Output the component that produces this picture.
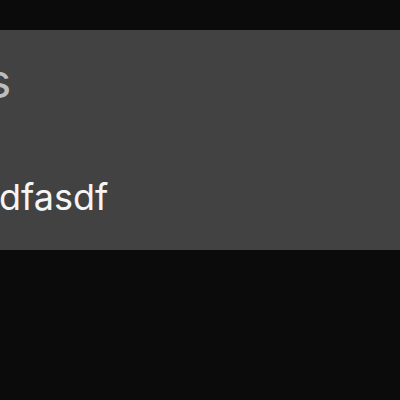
import React from 'react';

const App: React.FC = () => {
    return (
        <div className="min-h-[400px] w-[400px] overflow-hidden bg-[#0b0b0b] pt-[30px]" style={{ fontFamily: 'Inter, "Noto Sans", sans-serif' }}>
            <div className="h-[220px] w-full bg-[#424242] overflow-hidden">
                <div className="-ml-[14px] pt-[27px] text-[48px] leading-none text-[#bdbdbd]">s</div>
                <div className="-ml-[1px] mt-[74px] text-[36px] leading-none text-[#f5f5f5]">dfasdf</div>
            </div>
        </div>
    );
};

export default App;
